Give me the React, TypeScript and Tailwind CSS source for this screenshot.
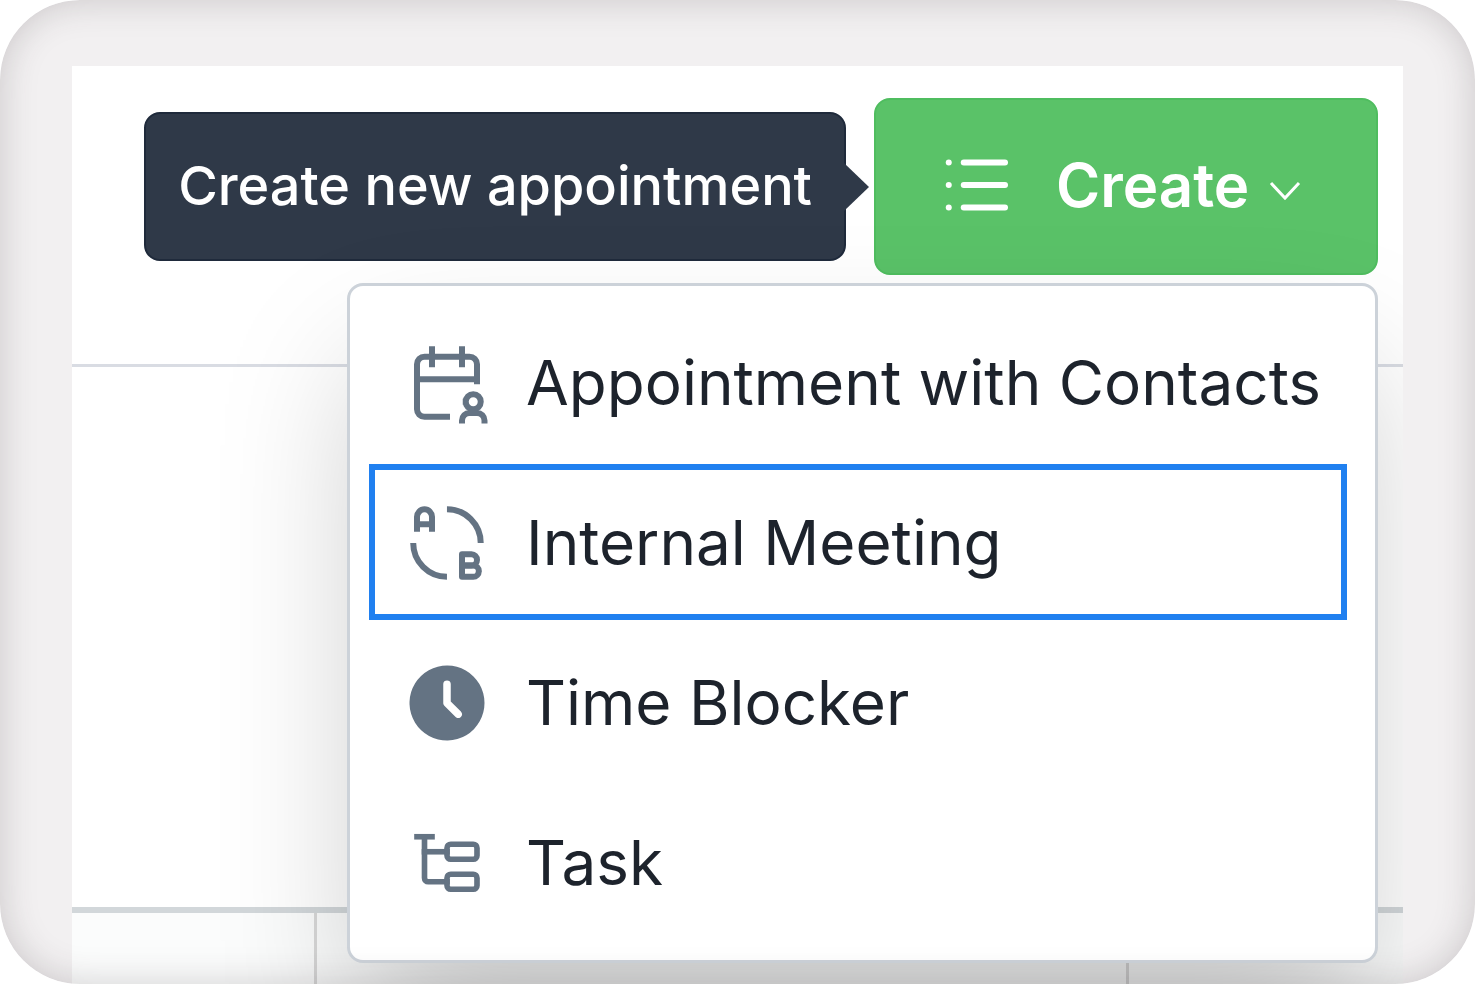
import React from "react";
import {
  TbAB2,
  TbCalendarUser,
  TbClockFilled,
  TbList,
  TbSubtask,
} from "react-icons/tb";

const menuItems = [
  { label: "Appointment with Contacts", icon: TbCalendarUser, strokeWidth: 1.6 },
  { label: "Internal Meeting", icon: TbAB2, strokeWidth: 1.6, selected: true },
  { label: "Time Blocker", icon: TbClockFilled, strokeWidth: 0 },
  { label: "Task", icon: TbSubtask, strokeWidth: 1.5 },
];

function Tooltip() {
  return (
    <div
      role="tooltip"
      className="relative flex h-[149px] items-center rounded-2xl border-2 border-[#1f2a3b] bg-[#2f3948] px-8 pb-0.5 text-[54px] leading-[72px] font-medium whitespace-nowrap text-white"
    >
      Create new appointment
      <svg
        className="absolute left-full top-1/2 h-12 w-[25px] -translate-y-1/2"
        viewBox="0 0 25 48"
        fill="#2f3948"
      >
        <path d="M0 0 25 24 0 48Z" />
      </svg>
    </div>
  );
}

function CreateMenu() {
  return (
    <div
      role="menu"
      className="absolute right-0 top-full mt-2 flex w-[1031px] flex-col gap-1 rounded-2xl border-3 border-[#ccd2d9] bg-white pt-[18px] pr-7 pb-5 pl-[19px] shadow-[0_70px_140px_-14px_rgba(0,0,0,0.21)]"
    >
      {menuItems.map(({ label, icon: Icon, strokeWidth, selected }) => (
        <button
          key={label}
          role="menuitem"
          className={`flex h-[156px] items-center gap-[34px] border-[6px] pt-0.5 pl-[27px] text-left text-[62px] leading-[80px] whitespace-nowrap text-[#1d232c] ${
            selected ? "border-[#2080f0]" : "border-transparent"
          }`}
        >
          <Icon
            size={90}
            strokeWidth={strokeWidth}
            strokeLinecap={selected ? "butt" : "square"}
            className="shrink-0 text-[#647383]"
          />
          {label}
        </button>
      ))}
    </div>
  );
}

export default function App() {
  return (
    <div className="relative flex min-h-screen flex-col overflow-hidden rounded-[80px] bg-[#f2f0f1] px-[72px] pt-[66px] font-['Inter',sans-serif]">
      <main className="flex flex-1 flex-col overflow-hidden bg-white">
        <header className="relative z-10 flex h-[301px] items-start justify-end border-b-[3px] border-[#d9dce3] pt-8 pr-[25px]">
          <div className="relative flex items-center gap-7">
            <Tooltip />
            <button className="flex h-[177px] w-[504px] items-center rounded-2xl border-2 border-[#4fbd5f] bg-[#5ac268] pb-1 pl-[54px] text-[60px] leading-[72px] font-semibold text-white">
              <TbList size={90} strokeWidth={1.6} className="mr-9 shrink-0" />
              Create
              <svg
                className="mt-3 ml-[18px] h-6 w-9 shrink-0"
                viewBox="0 0 36 24"
                fill="none"
                stroke="currentColor"
                strokeWidth="3"
              >
                <path d="M4 4 18 19 32 4" />
              </svg>
            </button>
            <CreateMenu />
          </div>
        </header>

        {/* calendar area behind the menu */}
        <div className="h-[546px] border-b-[6px] border-[#d2d7da]" />
        <div className="flex flex-1 bg-[#fbfcfc]">
          <div className="w-[245px] border-r-[3px] border-[#d9d9d9]" />
          <div className="w-[812px] border-r-[3px] border-[#d9d9d9]" />
        </div>
      </main>

      {/* inner edge shade of the frame */}
      <div className="pointer-events-none absolute inset-0 z-20 rounded-[80px] shadow-[inset_0_0_36px_rgba(60,50,55,0.22)]" />
    </div>
  );
}
